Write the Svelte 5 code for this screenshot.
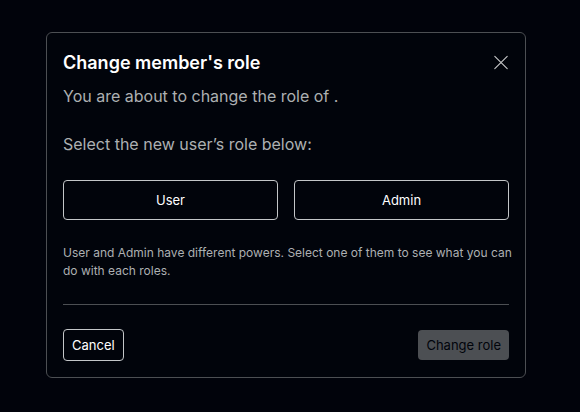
<script>
  let role = $state('');
</script>

<main>
  <section class="dialog" role="dialog" aria-labelledby="title">
    <header>
      <h1 id="title">Change member's role</h1>
      <button class="close" type="button" aria-label="Close">
        <svg viewBox="0 0 16 16" width="16" height="16" fill="none" stroke="currentColor" stroke-width="1.1" stroke-linecap="round">
          <path d="M1.8 1.3l12.4 12.4M14.2 1.3L1.8 13.7" />
        </svg>
      </button>
    </header>
    <p>You are about to change the role of .</p>
    <p class="prompt">Select the new user’s role below:</p>
    <div class="roles">
      <button type="button" aria-pressed={role === 'user'} onclick={() => (role = 'user')}>User</button>
      <button type="button" aria-pressed={role === 'admin'} onclick={() => (role = 'admin')}>Admin</button>
    </div>
    <p class="hint">User and Admin have different powers. Select one of them to see what you can do with each roles.</p>
    <footer>
      <button type="button">Cancel</button>
      <button class="submit" type="button" disabled={!role}>Change role</button>
    </footer>
  </section>
</main>

<style>
  :global(body) {
    margin: 0;
    background: #01030b;
  }
  main {
    padding: 32px 54px 32px 46px;
    font-family: Inter, "Liberation Sans", sans-serif;
    color: #fff;
  }
  .dialog {
    box-sizing: border-box;
    max-width: 480px;
    margin: 0 auto;
    padding: 16px;
    border: 1px solid #4c4f53;
    border-radius: 6px;
    background: #01040b;
  }
  header {
    display: flex;
    align-items: center;
    justify-content: space-between;
  }
  h1 {
    margin: 0;
    font-size: 18px;
    line-height: 27px;
    font-weight: 600;
  }
  p {
    margin: 8px 0 0;
    font-size: 16px;
    line-height: 24px;
    color: #adb0b2;
  }
  .prompt {
    margin-top: 24px;
  }
  button {
    box-sizing: border-box;
    height: 32px;
    padding: 0 8px;
    border: 1px solid #c3c6c8;
    border-radius: 4px;
    background: transparent;
    color: #fff;
    font-family: inherit;
    font-size: 13px;
    line-height: 20px;
  }
  .close {
    display: flex;
    height: 16px;
    padding: 0;
    border: 0;
    color: #c8c9ca;
  }
  .roles {
    display: flex;
    gap: 16px;
    margin-top: 24px;
  }
  .roles button {
    flex: 1;
    height: 40px;
  }
  .hint {
    margin-top: 24px;
    margin-right: -8px;
    font-size: 12px;
    line-height: 18px;
  }
  footer {
    display: flex;
    align-items: center;
    justify-content: space-between;
    margin-top: 24px;
    padding-top: 24px;
    border-top: 1px solid #4c4f53;
  }
  .submit {
    height: 30px;
    border: 0;
  }
  .submit:disabled {
    background: #4c4f53;
    color: #01040b;
  }
</style>
